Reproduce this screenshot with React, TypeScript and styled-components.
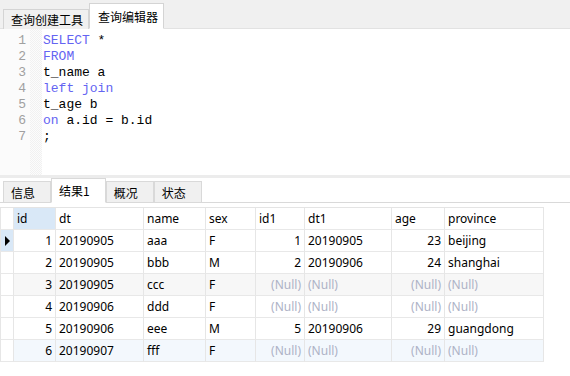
import React from 'react';
import styled, { createGlobalStyle } from 'styled-components';

const GlobalStyle = createGlobalStyle`
  html, body {
    margin: 0;
    padding: 0;
    background: #fff;
  }
  body {
    font-family: 'Noto Sans', 'Noto Sans CJK SC', sans-serif;
    font-size: 12px;
    color: #000;
  }
`;

const cjk = `'Noto Sans CJK SC', 'Noto Sans', sans-serif`;
const mono = `'Liberation Mono', 'DejaVu Sans Mono', monospace`;

const Window = styled.div`
  width: 570px;
  height: 376px;
  display: flex;
  flex-direction: column;
  overflow: hidden;
  background: #fff;
`;

const DocTabs = styled.div`
  height: 29px;
  box-sizing: border-box;
  display: flex;
  align-items: flex-end;
  padding-left: 3px;
  background: #f0f0f0;
  border-bottom: 1px solid #e2e2e2;
`;

const DocTab = styled.div<{ $active?: boolean }>`
  height: ${(p) => (p.$active ? 26 : 20)}px;
  box-sizing: border-box;
  display: flex;
  align-items: center;
  padding: 0 5px 0 ${(p) => (p.$active ? 8 : 7)}px;
  margin-bottom: -1px;
  border: 1px solid #d4d4d4;
  border-bottom: ${(p) => (p.$active ? '1px solid #fff' : 'none')};
  background: ${(p) => (p.$active ? '#fff' : '#f0f0f0')};
  font-family: ${cjk};
  font-size: 12px;
`;

const Editor = styled.div`
  height: 146px;
  display: flex;
  background: #fff;
`;

const Gutter = styled.div`
  width: 30px;
  padding-top: 4px;
  background: #fbfbfb;
`;

const LineNo = styled.div`
  height: 16px;
  line-height: 16px;
  padding-right: 4px;
  text-align: right;
  font-family: ${mono};
  font-size: 13px;
  color: #a0a0a0;
`;

const FoldStrip = styled.div`
  width: 12px;
  background: repeating-conic-gradient(#f1f1f1 0 25%, #fcfcfc 0 50%) 0 0 / 2px 2px;
`;

const Code = styled.div`
  flex: 1;
  padding: 4px 0 0 1px;
`;

const CodeLine = styled.div`
  height: 16px;
  line-height: 16px;
  white-space: pre;
  font-family: ${mono};
  font-size: 13px;
  color: #000;
`;

const Kw = styled.span`
  color: #6464f2;
`;

const Splitter = styled.div`
  height: 3px;
  background: #ececec;
`;

const ResultTabs = styled.div`
  height: 25px;
  box-sizing: border-box;
  display: flex;
  align-items: flex-end;
  padding-left: 3px;
  border-bottom: 1px solid #d9d9d9;
`;

const ResultTab = styled.div<{ $active?: boolean }>`
  height: ${(p) => (p.$active ? 25 : 22)}px;
  box-sizing: border-box;
  display: flex;
  align-items: center;
  padding: 0 15px 0 7px;
  margin-bottom: -1px;
  border: 1px solid #d9d9d9;
  border-bottom: 1px solid ${(p) => (p.$active ? '#fff' : '#d9d9d9')};
  background: ${(p) => (p.$active ? '#fff' : '#f0f0f0')};
  font-family: ${cjk};
  font-size: 12px;
`;

const GridArea = styled.div`
  flex: 1;
  padding-top: 4px;
`;

const Grid = styled.div`
  width: 544px;
  display: grid;
  grid-template-columns: 14px 42px 88px 62px 50px 49px 87px 53px 99px;
  border-top: 1px solid #e4e4e4;
`;

const Cell = styled.div<{ $num?: boolean; $bg?: string; $null?: boolean }>`
  height: 22px;
  box-sizing: border-box;
  padding: 0 3px;
  line-height: 21px;
  border-right: 1px solid #e6e6e6;
  border-bottom: 1px solid #e8e8e8;
  background: ${(p) => p.$bg || '#fff'};
  color: ${(p) => (p.$null ? '#adb2c6' : '#000')};
  text-align: ${(p) => (p.$num ? 'right' : 'left')};
  white-space: nowrap;
  overflow: hidden;
`;

const Indicator = styled.div<{ $current?: boolean }>`
  height: 22px;
  box-sizing: border-box;
  display: flex;
  align-items: center;
  padding-left: 4px;
  border-left: 1px solid #e6e6e6;
  border-right: 1px solid #e6e6e6;
  border-bottom: 1px solid #e8e8e8;
  background: ${(p) => (p.$current ? '#d9e8f7' : '#fff')};
`;

const Arrow = styled.span`
  width: 0;
  height: 0;
  border-left: 5px solid #000;
  border-top: 5px solid transparent;
  border-bottom: 5px solid transparent;
`;

const columns = [
  { name: 'id', num: true },
  { name: 'dt' },
  { name: 'name' },
  { name: 'sex' },
  { name: 'id1', num: true },
  { name: 'dt1' },
  { name: 'age', num: true },
  { name: 'province' },
];

type Val = string | number | null;

const rows: Val[][] = [
  [1, '20190905', 'aaa', 'F', 1, '20190905', 23, 'beijing'],
  [2, '20190905', 'bbb', 'M', 2, '20190906', 24, 'shanghai'],
  [3, '20190905', 'ccc', 'F', null, null, null, null],
  [4, '20190906', 'ddd', 'F', null, null, null, null],
  [5, '20190906', 'eee', 'M', 5, '20190906', 29, 'guangdong'],
  [6, '20190907', 'fff', 'F', null, null, null, null],
];

const rowBg = ['#fff', '#fff', '#f7f7f7', '#fff', '#fff', '#f3f8fd'];

const sql: React.ReactNode[] = [
  <>
    <Kw>SELECT</Kw> *
  </>,
  <Kw>FROM</Kw>,
  't_name a',
  <Kw>left join</Kw>,
  't_age b',
  <>
    <Kw>on</Kw> a.id = b.id
  </>,
  ';',
];

export default function App() {
  return (
    <>
      <GlobalStyle />
      <Window>
        <DocTabs>
          <DocTab>查询创建工具</DocTab>
          <DocTab $active>查询编辑器</DocTab>
        </DocTabs>
        <Editor>
          <Gutter>
            {sql.map((_, i) => (
              <LineNo key={i}>{i + 1}</LineNo>
            ))}
          </Gutter>
          <FoldStrip />
          <Code>
            {sql.map((line, i) => (
              <CodeLine key={i}>{line}</CodeLine>
            ))}
          </Code>
        </Editor>
        <Splitter />
        <ResultTabs>
          <ResultTab>信息</ResultTab>
          <ResultTab $active>结果1</ResultTab>
          <ResultTab>概况</ResultTab>
          <ResultTab>状态</ResultTab>
        </ResultTabs>
        <GridArea>
          <Grid>
            <Indicator />
            {columns.map((c, i) => (
              <Cell key={c.name} $bg={i === 0 ? '#d9e8f7' : undefined}>
                {c.name}
              </Cell>
            ))}
            {rows.map((r, ri) => (
              <React.Fragment key={ri}>
                <Indicator $current={ri === 0}>{ri === 0 && <Arrow />}</Indicator>
                {r.map((v, ci) => (
                  <Cell key={ci} $num={columns[ci].num} $bg={rowBg[ri]} $null={v === null}>
                    {v === null ? '(Null)' : v}
                  </Cell>
                ))}
              </React.Fragment>
            ))}
          </Grid>
        </GridArea>
      </Window>
    </>
  );
}
